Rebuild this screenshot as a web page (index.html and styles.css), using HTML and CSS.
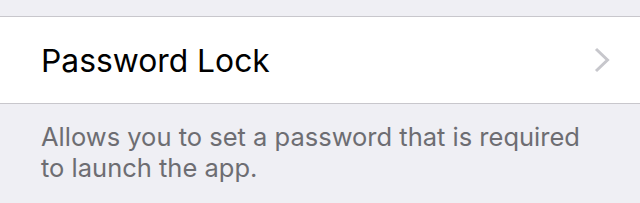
FILE: index.html
```html
<!DOCTYPE html>
<html>
<head>
<meta charset="utf-8">
<link rel="stylesheet" href="styles.css">
</head>
<body>
<div class="page">
  <div class="spacer"></div>
  <div class="cell">
    <span class="cell-title">Password Lock</span>
    <svg class="chevron" width="16" height="26" viewBox="0 0 16 26"><path d="M2 2 L13.5 13 L2 24" fill="none" stroke="#c7c7cc" stroke-width="3"/></svg>
  </div>
  <div class="footer">Allows you to set a password that is required to launch the app.</div>
</div>
</body>
</html>
```
FILE: styles.css
```css
html, body {
  margin: 0;
  padding: 0;
  background: #efeff4;
}
.page {
  width: 640px;
  height: 203px;
  overflow: hidden;
  font-family: "Inter", "Roboto", "Liberation Sans", sans-serif;
}
.spacer {
  height: 16px;
}
.cell {
  height: 86px;
  background: #ffffff;
  border-top: 1px solid #c8c7cc;
  border-bottom: 1px solid #c8c7cc;
  display: flex;
  align-items: center;
  justify-content: space-between;
  padding: 0 30px 0 41px;
}
.cell-title {
  font-size: 31.8px;
  color: #000000;
}
.chevron {
  display: block;
}
.footer {
  padding: 17px 40px 0 41px;
  font-size: 25.5px;
  line-height: 31px;
  color: #6d6d72;
}
```
